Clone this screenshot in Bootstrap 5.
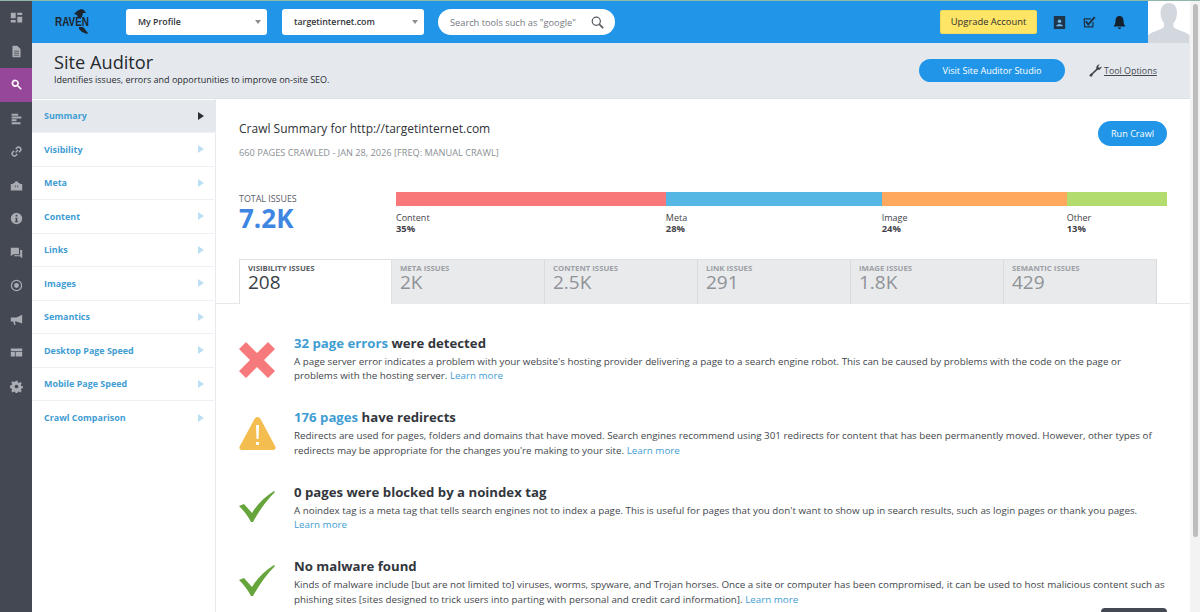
<!DOCTYPE html>
<html lang="en">
<head>
<meta charset="UTF-8">
<title>Site Auditor</title>
<link href="https://cdn.jsdelivr.net/npm/bootstrap@5.3.0/dist/css/bootstrap.min.css" rel="stylesheet">
<style>
html, body { height: 612px; overflow: hidden; }
body { font-family: "Open Sans", "Liberation Sans", sans-serif; font-size: 9.6px; color: #3a3f47; background: #fff; border-top: 1px solid #8fb8a8; }
.shell { height: 611px; }
.rail { width: 32px; background: #434852; flex: none; }
.rail-item { height: 33.5px; }
.rail-item svg { width: 13px; height: 13px; fill: #a9adb3; }
.rail-item.active { background: #97479a; }
.rail-item.active svg { fill: #fff; }
.main-col { width: 1158px; flex: none; }
.topbar { height: 42px; background: #2196e8; }
.logo-box { width: 94px; padding-left: 22px; }
.logo-svg { display: block; overflow: visible; }
.pick { height: 26px; background: #fff; border-radius: 3px; font-size: 8.8px; font-weight: 600; color: #30343a; padding: 0 6px 0 12px; }
.pick span, .search-pill span { padding-top: 1px; }
.pick-a { width: 141px; }
.pick-b { width: 142px; margin-left: 15px; }
.caret-down { width: 0; height: 0; border-left: 3px solid transparent; border-right: 3px solid transparent; border-top: 4px solid #8b8f94; }
.search-pill { width: 177px; height: 26px; margin-left: 14px; background: #fff; border-radius: 13px; padding: 0 11px 0 12px; font-size: 9.25px; color: #74797f; }
.upgrade { width: 97px; height: 24px; background: #ffe566; border-radius: 3px; font-size: 9.4px; color: #2d2f30; margin-left: auto; box-shadow: 0 0 0 1px #f0d95c inset; }
.top-icons { gap: 17px; margin-left: 16px; margin-right: 22px; }
.top-icons svg { width: 13px; height: 13px; display: block; }
.avatar { width: 42px; height: 42px; background: #fff; flex: none; }
.avatar svg { display: block; }
.subhead { height: 56px; background: #e5e9ee; padding: 0 35px 0 22px; flex: none; border-bottom: 1px solid #dde1e6; }
.head-left { align-self: flex-start; padding-top: 9px; }
.page-title { font-size: 18.2px; line-height: 21px; color: #26292e; margin: 0 0 1px; font-weight: 400; }
.page-sub { font-size: 9px; line-height: 12px; color: #26292e; }
.pill-btn { background: #2196e8; color: #fff; border-radius: 12px; border: 0; font-size: 9.1px; padding: 0; }
.studio { width: 146px; height: 23px; }
.tool-opts { font-size: 8.9px; color: #45494f; text-decoration: underline; margin-left: 24px; width: 66px; }
.tool-opts svg { width: 13px; height: 13px; margin-right: 2px; flex: none; }
.body-row { min-height: 0; }
.side-nav { width: 184px; flex: none; box-shadow: inset -1px 0 0 #e6e9ed; padding-top: .5px; }
.side-link { height: 33.5px; flex: none; padding: 0 12px; font-weight: 700; font-size: 8.95px; color: #3f9dd3; border-bottom: 1px solid #edf0f4; text-decoration: none; }
.side-link.active { background: #e5e9ee; }
.tri { width: 0; height: 0; border-top: 4.5px solid transparent; border-bottom: 4.5px solid transparent; border-left: 6px solid #bcdff3; }
.side-link.active .tri { border-left-color: #2c3036; }
.report { flex: 1; min-width: 0; position: relative; overflow: hidden; }
.report-top { padding: 22px 23px 0 23px; }
.crawl-title { font-size: 12px; line-height: 16px; color: #2f3338; margin: 0; font-weight: 400; }
.crawl-meta { font-size: 9.2px; color: #8b8f94; margin-top: 9px; }
.run-btn { width: 69px; height: 25px; border-radius: 13px; }
.totals { margin-top: 32px; }
.total-box { width: 157px; padding-top: 1px; }
.total-label { font-size: 8.9px; line-height: 11px; color: #5b6066; }
.total-num { font-size: 26px; line-height: 28px; font-weight: 700; color: #3f86e2; }
.bar-col { flex: 1; }
.bar-row { height: 14px; }
.seg-red { background: #f8787a; }
.seg-blue { background: #54b7e4; }
.seg-orange { background: #ffa95e; }
.seg-green { background: #b2dc6e; }
.bar-labels { margin-top: 6px; font-size: 9px; line-height: 11px; color: #3f4349; }
.bar-labels b { font-size: 9.4px; display: block; font-weight: 700; }
.issue-tabs { margin: 25px 0 0 23px; height: 45px; }
.issue-tab { width: 153px; height: 45px; background: #e9eaec; border-top: 1px solid #dfe1e4; border-right: 1px solid #d9dbde; padding: 4px 8px; color: #8f9398; }
.issue-tab.on { position: relative; background: #fff; border: 1px solid #dfe1e4; border-bottom: 0; color: #3a3e45; }
.tab-label { font-size: 7.8px; line-height: 9px; font-weight: 700; opacity: .85; }
.tab-num { font-size: 19px; line-height: 19px; }
.tabs-rule { border-top: 1px solid #e6e8eb; margin-top: -1px; }
.find-list { padding: 31px 23px 0 23px; }
.find-row { height: 74.5px; }
.find-icon { width: 55px; flex: none; padding-top: 7px; }
.find-title { font-size: 13.2px; line-height: 16px; font-weight: 700; color: #33373d; margin: 0 0 4px; }
.find-title a, .find-text a { color: #3f9dd3; text-decoration: none; }
.find-text { font-size: 9.8px; line-height: 14.4px; color: #42464c; margin: 0; white-space: nowrap; }
.peek-btn { position: absolute; right: 23px; bottom: 0; width: 66px; height: 4px; background: #434852; border-radius: 12px 12px 0 0; }
.scroll-track { width: 10px; flex: none; background: #f3f3f3; padding: 3px 2px 0 3px; }
.scroll-thumb { height: 533px; background: #bdbdbd; border-radius: 3px; }
</style>
</head>
<body>
<div class="shell d-flex">
  <div class="rail d-flex flex-column">
    <div class="rail-item d-flex align-items-center justify-content-center"><svg viewBox="0 0 16 16"><path d="M1 2h6v7H1zM9 2h6v3H9zM9 7h6v7H9zM1 11h6v3H1z"/></svg></div>
    <div class="rail-item d-flex align-items-center justify-content-center"><svg viewBox="0 0 16 16"><path d="M3 1h6l4 4v10H3zM5 7v1h6V7zm0 2.500v1h6v-1zM5 12v1h6v-1z" fill-rule="evenodd"/></svg></div>
    <div class="rail-item active d-flex align-items-center justify-content-center"><svg viewBox="0 0 16 16"><path d="M6.500 2a4.500 4.500 0 0 1 3.700 7l4.300 4.100-1.400 1.400L8.800 10.300A4.500 4.500 0 1 1 6.500 2zm0 2a2.500 2.500 0 1 0 0 5 2.500 2.500 0 0 0 0-5z" fill-rule="evenodd"/></svg></div>
    <div class="rail-item d-flex align-items-center justify-content-center"><svg viewBox="0 0 16 16"><path d="M2 2h8v2.500H2zM2 5.500h12V8H2zM2 9h6v2.500H2zM2 12.500h11V15H2z"/></svg></div>
    <div class="rail-item d-flex align-items-center justify-content-center"><svg viewBox="0 0 16 16"><path d="M6.800 9.200l3-3M7 4.800l1.500-1.500a2.800 2.800 0 0 1 4 4L11 8.800M9 11.200l-1.500 1.500a2.800 2.800 0 0 1-4-4L5 7.200" fill="none" stroke="#a9adb3" stroke-width="1.800"/></svg></div>
    <div class="rail-item d-flex align-items-center justify-content-center"><svg viewBox="0 0 16 16"><path d="M1 6h3V5h2V3h4v2h2v1h3v8H1zM6 8v2h1V8zm3 0v2h1V8z" fill-rule="evenodd"/></svg></div>
    <div class="rail-item d-flex align-items-center justify-content-center"><svg viewBox="0 0 16 16"><path d="M8 1a7 7 0 1 1 0 14A7 7 0 0 1 8 1zM7 3.500v2h2v-2zM6.500 7v1H7v3.500H6V12.500h4v-1H9V7z" fill-rule="evenodd"/></svg></div>
    <div class="rail-item d-flex align-items-center justify-content-center"><svg viewBox="0 0 16 16"><path d="M1 2h10v8H4l-3 2.500zM12.500 5H15v10l-3-2.500H5V11.500h7.500z"/></svg></div>
    <div class="rail-item d-flex align-items-center justify-content-center"><svg viewBox="0 0 16 16"><path d="M8 1a7 7 0 1 1 0 14A7 7 0 0 1 8 1zm0 1.500a5.500 5.500 0 1 0 0 11 5.500 5.500 0 0 0 0-11zM8 5a3 3 0 1 1 0 6 3 3 0 0 1 0-6z" fill-rule="evenodd"/></svg></div>
    <div class="rail-item d-flex align-items-center justify-content-center"><svg viewBox="0 0 16 16"><path d="M15 2v11L8 10.500H6l1 4H5l-1-4H1v-5h7z"/></svg></div>
    <div class="rail-item d-flex align-items-center justify-content-center"><svg viewBox="0 0 16 16"><path d="M1 3h14v3.500H1zM1 7.500h5V13H1zM7 7.500h8V13H7z"/></svg></div>
    <div class="rail-item d-flex align-items-center justify-content-center"><svg viewBox="0 0 16 16"><path d="M6.800 1h2.400l.4 2 1.300.6 1.800-1.100 1.700 1.700-1.100 1.800.6 1.300 2 .4v2.400l-2 .4-.6 1.300 1.100 1.800-1.700 1.700-1.800-1.100-1.300.6-.4 2H6.800l-.4-2-1.300-.6-1.800 1.100-1.700-1.700 1.100-1.800-.6-1.300-2-.4V6.700l2-.4.6-1.300-1.100-1.800 1.700-1.700 1.800 1.100 1.300-.6zM8 5.700a2.300 2.300 0 1 0 0 4.600 2.300 2.300 0 0 0 0-4.600z" fill-rule="evenodd"/></svg></div>
  </div>

  <div class="main-col d-flex flex-column">
    <div class="d-flex">
      <div class="topbar d-flex align-items-center flex-grow-1">
        <div class="logo-box">
          <svg class="logo-svg" width="36" height="26" viewBox="0 0 36 26"><path d="M23 2l4-2 3 1 2 3-3 0-1 4-4 1-1-3-3-1z" fill="#1d2530"/><path d="M25 18h4l5 6-1 1-5-2-3-3z" fill="#1d2530"/><text x="1" y="17" font-family="Liberation Sans, sans-serif" font-size="12" font-weight="700" fill="#1d2530" textLength="34" lengthAdjust="spacingAndGlyphs">RAVEN</text></svg>
        </div>
        <div class="pick pick-a d-flex align-items-center justify-content-between"><span>My Profile</span><i class="caret-down"></i></div>
        <div class="pick pick-b d-flex align-items-center justify-content-between"><span>targetinternet.com</span><i class="caret-down"></i></div>
        <div class="search-pill d-flex align-items-center justify-content-between"><span>Search tools such as "google"</span>
          <svg width="13" height="13" viewBox="0 0 16 16" fill="none" stroke="#555a60" stroke-width="1.500"><circle cx="6.500" cy="6.500" r="5"/><path d="M10.300 10.300L15 15" stroke-width="2"/></svg></div>
        <div class="upgrade d-flex align-items-center justify-content-center">Upgrade Account</div>
        <div class="top-icons d-flex align-items-center">
          <svg viewBox="0 0 16 16"><path d="M1 0h14v16H1z" fill="#1e3448"/><circle cx="8" cy="6.500" r="2.200" fill="#6fb8ea"/><path d="M4 12.500c0-3 8-3 8 0z" fill="#6fb8ea"/></svg>
          <svg viewBox="0 0 16 16" fill="none" stroke="#1f3042"><path d="M1 3.500h9M1.500 3.500l.5 10h10l.5-6" stroke-width="1.500"/><path d="M3.500 6.500l3 4L14.500 1.500" stroke-width="2.400"/></svg>
          <svg viewBox="0 0 16 16" fill="#14202c"><path d="M8 0c3 0 5 2.500 5 6 0 3 .7 4.500 2 6v1H1v-1c1.300-1.500 2-3 2-6 0-3.500 2-6 5-6zM6 14h4a2 2 0 0 1-4 0z"/></svg>
        </div>
      </div>
      <div class="avatar">
        <svg width="42" height="42" viewBox="0 0 42 42" fill="#d3d8df"><path d="M21 2c6 0 8 5 8 10 0 4-1.500 8-3.500 10v4c3 3 11 4 16 8v8H0v-8c5-4 13-5 16-8v-4c-2-2-3.500-6-3.500-10C12.500 7 15 2 21 2z"/></svg>
      </div>
    </div>

    <div class="subhead d-flex align-items-center justify-content-between">
      <div class="head-left">
        <h1 class="page-title">Site Auditor</h1>
        <div class="page-sub">Identifies issues, errors and opportunities to improve on-site SEO.</div>
      </div>
      <div class="d-flex align-items-center">
        <button class="pill-btn studio">Visit Site Auditor Studio</button>
        <div class="tool-opts d-flex align-items-center">
          <svg viewBox="0 0 16 16" fill="none" stroke="#3e4248"><path d="M11 5.500L4 12" stroke-width="2"/><path d="M1.500 15l2.500-3" stroke-width="3"/><path d="M15.500 3.500l-3 1.500-1.500-1.500 1.500-3-2.500 1.500-1 3 2 2 2.500-.5z" fill="#3e4248" stroke-width=".5"/></svg><span class="text-nowrap">Tool Options</span>
        </div>
      </div>
    </div>

    <div class="body-row d-flex flex-grow-1">
      <div class="side-nav d-flex flex-column">
        <a class="side-link active d-flex align-items-center justify-content-between" href="#">Summary<i class="tri"></i></a>
        <a class="side-link d-flex align-items-center justify-content-between" href="#">Visibility<i class="tri"></i></a>
        <a class="side-link d-flex align-items-center justify-content-between" href="#">Meta<i class="tri"></i></a>
        <a class="side-link d-flex align-items-center justify-content-between" href="#">Content<i class="tri"></i></a>
        <a class="side-link d-flex align-items-center justify-content-between" href="#">Links<i class="tri"></i></a>
        <a class="side-link d-flex align-items-center justify-content-between" href="#">Images<i class="tri"></i></a>
        <a class="side-link d-flex align-items-center justify-content-between" href="#">Semantics<i class="tri"></i></a>
        <a class="side-link d-flex align-items-center justify-content-between" href="#">Desktop Page Speed<i class="tri"></i></a>
        <a class="side-link d-flex align-items-center justify-content-between" href="#">Mobile Page Speed<i class="tri"></i></a>
        <a class="side-link d-flex align-items-center justify-content-between border-0" href="#">Crawl Comparison<i class="tri"></i></a>
      </div>

      <div class="report">
        <div class="report-top">
          <div class="d-flex justify-content-between align-items-start">
            <div>
              <h2 class="crawl-title">Crawl Summary for http://targetinternet.com</h2>
              <div class="crawl-meta">660 PAGES CRAWLED - JAN 28, 2026 [FREQ: MANUAL CRAWL]</div>
            </div>
            <button class="pill-btn run-btn">Run Crawl</button>
          </div>
          <div class="totals d-flex">
            <div class="total-box">
              <div class="total-label">TOTAL ISSUES</div>
              <div class="total-num">7.2K</div>
            </div>
            <div class="bar-col">
              <div class="bar-row d-flex">
                <div class="seg-red" style="width:35%"></div>
                <div class="seg-blue" style="width:28%"></div>
                <div class="seg-orange" style="width:24%"></div>
                <div class="seg-green" style="width:13%"></div>
              </div>
              <div class="bar-labels d-flex">
                <div style="width:35%">Content<b>35%</b></div>
                <div style="width:28%">Meta<b>28%</b></div>
                <div style="width:24%">Image<b>24%</b></div>
                <div style="width:13%">Other<b>13%</b></div>
              </div>
            </div>
          </div>
        </div>
        <div class="issue-tabs d-flex">
          <div class="issue-tab on"><div class="tab-label">VISIBILITY ISSUES</div><div class="tab-num">208</div></div>
          <div class="issue-tab"><div class="tab-label">META ISSUES</div><div class="tab-num">2K</div></div>
          <div class="issue-tab"><div class="tab-label">CONTENT ISSUES</div><div class="tab-num">2.5K</div></div>
          <div class="issue-tab"><div class="tab-label">LINK ISSUES</div><div class="tab-num">291</div></div>
          <div class="issue-tab"><div class="tab-label">IMAGE ISSUES</div><div class="tab-num">1.8K</div></div>
          <div class="issue-tab"><div class="tab-label">SEMANTIC ISSUES</div><div class="tab-num">429</div></div>
        </div>
        <div class="tabs-rule"></div>
        <div class="find-list">
          <div class="find-row d-flex">
            <div class="find-icon"><svg width="36" height="36" viewBox="0 0 36 36"><path d="M7 0l11 11L29 0l7 7-11 11 11 11-7 7-11-11L7 36l-7-7 11-11L0 7z" fill="#f6797c"/></svg></div>
            <div>
              <h3 class="find-title"><a href="#">32 page errors</a> were detected</h3>
              <p class="find-text">A page server error indicates a problem with your website's hosting provider delivering a page to a search engine robot. This can be caused by problems with the code on the page or<br>problems with the hosting server. <a href="#">Learn more</a></p>
            </div>
          </div>
          <div class="find-row d-flex">
            <div class="find-icon"><svg width="37" height="35" viewBox="0 0 37 35"><path d="M18.500 1c1.500 0 2.500 1 3.200 2.300l14.500 27c1 2 0 3.700-2.200 3.700H3c-2.200 0-3.200-1.700-2.200-3.700l14.500-27C16 2 17 1 18.500 1z" fill="#f3bd4f"/><path d="M17 9h3l-.5 14h-2zM17 26h3v3h-3z" fill="#fff"/></svg></div>
            <div>
              <h3 class="find-title"><a href="#">176 pages</a> have redirects</h3>
              <p class="find-text">Redirects are used for pages, folders and domains that have moved. Search engines recommend using 301 redirects for content that has been permanently moved. However, other types of<br>redirects may be appropriate for the changes you're making to your site. <a href="#">Learn more</a></p>
            </div>
          </div>
          <div class="find-row d-flex">
            <div class="find-icon"><svg width="36" height="32" viewBox="0 0 36 32"><path d="M0 15l5-2 8 9C18 13 26 6 35 0l1 1C27 10 20 20 14 31h-2C9 25 5 20 0 15z" fill="#66a53c"/></svg></div>
            <div>
              <h3 class="find-title">0 pages were blocked by a noindex tag</h3>
              <p class="find-text">A noindex tag is a meta tag that tells search engines not to index a page. This is useful for pages that you don't want to show up in search results, such as login pages or thank you pages.<br><a href="#">Learn more</a></p>
            </div>
          </div>
          <div class="find-row d-flex">
            <div class="find-icon"><svg width="36" height="32" viewBox="0 0 36 32"><path d="M0 15l5-2 8 9C18 13 26 6 35 0l1 1C27 10 20 20 14 31h-2C9 25 5 20 0 15z" fill="#66a53c"/></svg></div>
            <div>
              <h3 class="find-title">No malware found</h3>
              <p class="find-text">Kinds of malware include [but are not limited to] viruses, worms, spyware, and Trojan horses. Once a site or computer has been compromised, it can be used to host malicious content such as<br>phishing sites [sites designed to trick users into parting with personal and credit card information]. <a href="#">Learn more</a></p>
            </div>
          </div>
        </div>
        <div class="peek-btn"></div>
      </div>
    </div>
  </div>
  <div class="scroll-track"><div class="scroll-thumb"></div></div>
</div>
<script src="https://cdn.jsdelivr.net/npm/bootstrap@5.3.0/dist/js/bootstrap.bundle.min.js"></script>
</body>
</html>
